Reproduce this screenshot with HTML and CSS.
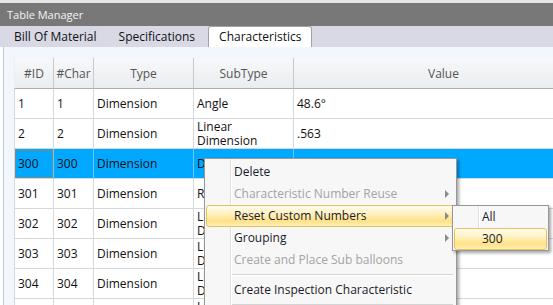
FILE: index.html
```html
<!DOCTYPE html>
<html lang="en">
<head>
    <meta charset="UTF-8">
    <title>Table Manager</title>
    <link rel="stylesheet" href="styles.css">
</head>
<body>
    <div class="window">
        <div class="titlebar">Table Manager</div>

        <div class="tabs">
            <div class="tab">Bill Of Material</div>
            <div class="tab">Specifications</div>
            <div class="tab active">Characteristics</div>
        </div>

        <div class="panel">
            <table class="grid">
                <colgroup>
                    <col class="c-id">
                    <col class="c-char">
                    <col class="c-type">
                    <col class="c-sub">
                    <col class="c-value">
                </colgroup>
                <thead>
                    <tr>
                        <th>#ID</th>
                        <th>#Char</th>
                        <th>Type</th>
                        <th>SubType</th>
                        <th>Value</th>
                    </tr>
                </thead>
                <tbody>
                    <tr>
                        <td>1</td><td>1</td><td>Dimension</td><td>Angle</td><td>48.6°</td>
                    </tr>
                    <tr>
                        <td>2</td><td>2</td><td>Dimension</td><td>Linear Dimension</td><td>.563</td>
                    </tr>
                    <tr class="selected">
                        <td class="focus">300</td><td>300</td><td>Dimension</td><td>Diameter</td><td></td>
                    </tr>
                    <tr>
                        <td>301</td><td>301</td><td>Dimension</td><td>Radius</td><td></td>
                    </tr>
                    <tr>
                        <td>302</td><td>302</td><td>Dimension</td><td>Linear Dimension</td><td></td>
                    </tr>
                    <tr>
                        <td>303</td><td>303</td><td>Dimension</td><td>Linear Dimension</td><td></td>
                    </tr>
                    <tr>
                        <td>304</td><td>304</td><td>Dimension</td><td>Linear Dimension</td><td></td>
                    </tr>
                    <tr>
                        <td>305</td><td>305</td><td>Dimension</td><td>Linear Dimension</td><td></td>
                    </tr>
                </tbody>
            </table>
        </div>

        <!-- context menu -->
        <div class="menu main-menu">
            <div class="item">Delete</div>
            <div class="item disabled">Characteristic Number Reuse<span class="arrow"></span></div>
            <div class="item hot">Reset Custom Numbers<span class="arrow"></span></div>
            <div class="item">Grouping<span class="arrow"></span></div>
            <div class="item disabled">Create and Place Sub balloons</div>
            <div class="sep"></div>
            <div class="item">Create Inspection Characteristic</div>
            <div class="sep"></div>
        </div>

        <div class="menu sub-menu">
            <div class="item">All</div>
            <div class="item hot">300</div>
        </div>
    </div>
</body>
</html>
```

FILE: styles.css
```css
* {
    margin: 0;
    padding: 0;
    box-sizing: border-box;
    font-family: 'Open Sans', 'Noto Sans', sans-serif;
}

body {
    width: 553px;
    height: 305px;
    overflow: hidden;
    background: #ffffff;
    font-size: 12px;
    color: #111;
}

.window {
    position: relative;
    height: 305px;
}

.titlebar {
    height: 26px;
    border-top: 3px solid #e6e6e6;
    background: #787878;
    color: #f4f4f4;
    padding: 1px 0 0 7px;
    font-size: 11px;
    line-height: 22px;
}

.tabs {
    display: flex;
    align-items: flex-end;
    height: 21px;
    padding-left: 3px;
    background: #d9d9e5;
}

.tab {
    height: 20px;
    line-height: 20px;
    padding: 0 11px;
    color: #111;
}

.tab.active {
    height: 21px;
    margin-left: 2px;
    padding: 0 10px;
    background: #ffffff;
    border: 1px solid #9ca3ad;
    border-bottom: none;
    border-radius: 3px 3px 0 0;
    line-height: 20px;
}

.panel {
    height: 258px;
    margin-left: 3px;
    padding: 11px 0 0 10px;
    background: #f2f6fd;
    border-left: 1px solid #b8c9e4;
}

.grid {
    width: 580px;
    table-layout: fixed;
    border-collapse: separate;
    border-spacing: 0;
    background: #ffffff;
}

.c-id { width: 40px; }
.c-char { width: 40px; }
.c-type { width: 100px; }
.c-sub { width: 100px; }
.c-value { width: 300px; }

.grid th {
    height: 31px;
    font-weight: normal;
    color: #555;
    text-align: center;
    background: linear-gradient(#f7f8fa, #eaedf0);
    border-right: 1px solid #c6c9ce;
    border-bottom: 1px solid #a9adb3;
}

.grid th:first-child {
    border-left: 1px solid #eceef1;
}

.grid td {
    height: 30px;
    padding: 0 3px;
    line-height: 14px;
    vertical-align: middle;
    border-right: 1px solid #d5d8de;
    border-bottom: 1px solid #d5d8de;
}

.grid td:first-child {
    border-left: 1px solid #d5d8de;
}

.grid tr.selected td {
    background: #00a8ff;
    border-right-color: #6cc9fb;
}

.grid td.focus {
    outline: 1px dotted #d9731e;
    outline-offset: -2px;
}

/* menus */
.menu {
    position: absolute;
    background: #f7f7f7;
    border: 1px solid #979797;
    box-shadow: 2px 2px 3px rgba(0, 0, 0, 0.35);
}

.menu::before {
    content: "";
    position: absolute;
    top: 0;
    bottom: 0;
    left: 25px;
    width: 1px;
    background: #e0e1e1;
    box-shadow: 1px 0 0 #ffffff;
}

.main-menu {
    left: 204px;
    top: 158px;
    width: 253px;
    height: 170px;
    padding: 2px 1px;
}

.sub-menu {
    left: 452px;
    top: 205px;
    width: 97px;
    height: 46px;
    padding: 0 1px;
}

.item {
    position: relative;
    height: 22px;
    line-height: 20px;
    padding-left: 27px;
    color: #1b1b2b;
    border: 1px solid transparent;
    border-radius: 3px;
}

.item.disabled {
    color: #a3a3a3;
}

.item.hot {
    border-color: #e5c365;
    background: linear-gradient(#fffcef 0%, #fff1be 40%, #ffe185 75%, #fff0ba 100%);
}

.arrow {
    position: absolute;
    right: 5px;
    top: 6px;
    border-left: 4px solid #8a8a8a;
    border-top: 4px solid transparent;
    border-bottom: 4px solid transparent;
}

.sep {
    height: 8px;
    margin-left: 25px;
    margin-right: 2px;
    padding-top: 3px;
}

.sep::after {
    content: "";
    display: block;
    height: 1px;
    background: #d4d4d4;
    box-shadow: 0 1px 0 #ffffff;
}
```
